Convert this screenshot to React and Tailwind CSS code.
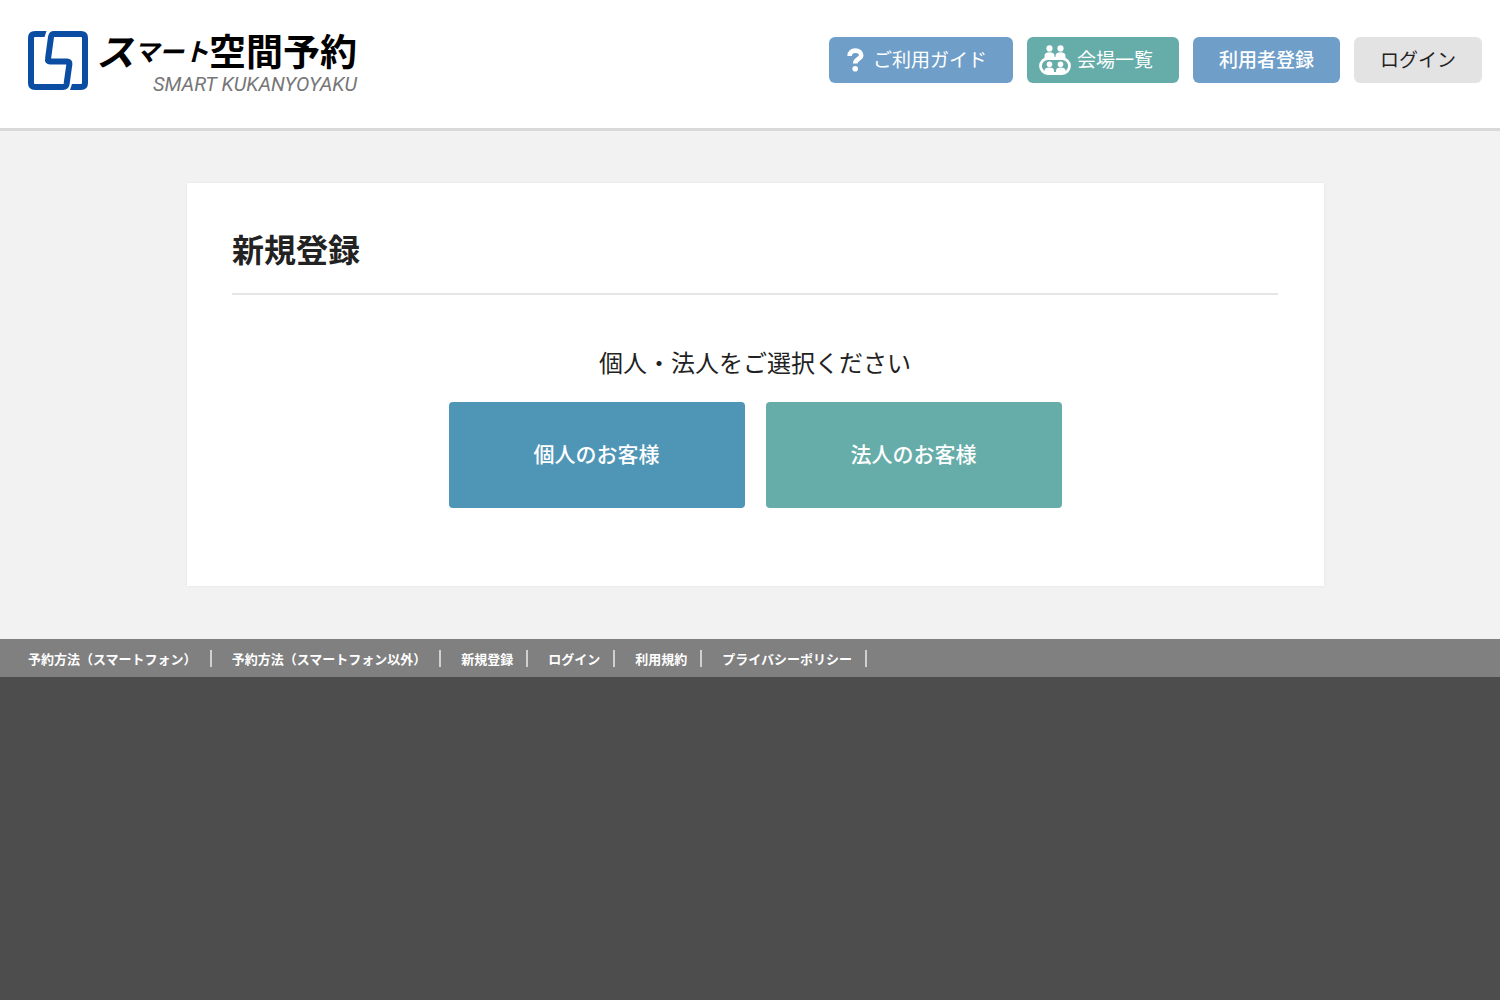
const footerLinks = [
  { href: '#guide-smartphone', label: '予約方法（スマートフォン）' },
  { href: '#guide-other', label: '予約方法（スマートフォン以外）' },
  { href: '#register', label: '新規登録' },
  { href: '#login', label: 'ログイン' },
  { href: '#terms', label: '利用規約' },
  { href: '#privacy', label: 'プライバシーポリシー' },
];

function LogoMark() {
  return (
    <svg width="60" height="60" viewBox="0 0 60 60" className="mt-px" aria-hidden="true">
      <g fill="none" stroke="#0b4da2" strokeWidth="6">
        <path d="M15 3H7Q3 3 3 7V52Q3 56 7 56H35Q38 56 38.6 53L41.4 33Q41.6 30.5 39 30.5H22Q19.5 30.5 20 28L23 6Q23.6 3 26 3H53Q57 3 57 7V52Q57 56 53 56H46" />
      </g>
      <path d="M14 0H18.5L16.5 6H14Z M47 53H44L42 59H47Z" fill="#0b4da2" />
    </svg>
  );
}

function QuestionIcon() {
  return (
    <svg width="17" height="24" viewBox="0 0 17 24" fill="none" aria-hidden="true">
      <path d="M2.6 8C2.6 4.4 5 2.6 8.4 2.6C12 2.6 14.2 4.6 14.2 7.2C14.2 11 8.2 11 8.2 15.6" stroke="white" strokeWidth="4.6" />
      <circle cx="8.2" cy="20.8" r="2.8" fill="white" />
    </svg>
  );
}

function VenueIcon() {
  return (
    <svg width="32" height="30" viewBox="0 0 32 30" aria-hidden="true">
      <g fill="white">
        <circle cx="10.5" cy="3.4" r="3.1" />
        <circle cx="21.5" cy="3.4" r="3.1" />
        <path d="M5.5 13V11Q5.500 7.300 10.5 7.300Q15.500 7.300 15.500 11V13Z" />
        <path d="M16.500 13V11Q16.500 7.300 21.5 7.300Q26.500 7.300 26.500 11V13Z" />
        <circle cx="10.5" cy="19.2" r="2.8" />
        <circle cx="21.5" cy="19.2" r="2.8" />
        <path d="M5.500 27V25.5Q5.500 22.600 10.5 22.600Q15 22.600 15 25.5V27Z" />
        <path d="M17 27V25.5Q17 22.600 21.5 22.600Q26.500 22.600 26.500 25.5V27Z" />
      </g>
      <rect x="1.5" y="13.5" width="29" height="15" rx="7.5" fill="none" stroke="white" strokeWidth="2.8" />
    </svg>
  );
}

function Logo() {
  return (
    <a href="#top" className="flex items-start gap-2">
      <LogoMark />
      <span className="flex flex-col items-end text-black">
        <span className="flex h-10 items-center leading-10 font-bold">
          <span className="text-[38px] italic">ス</span>
          <span className="text-[25px] italic">マート</span>
          <span className="text-[37px]">空間予約</span>
        </span>
        <span className="mt-1 font-[Roboto,sans-serif] text-[20px] leading-5 text-[#777] italic">
          SMART KUKANYOYAKU
        </span>
      </span>
    </a>
  );
}

export default function App() {
  return (
    <div className="flex min-h-screen flex-col bg-[#f2f2f2] font-['Noto_Sans_CJK_JP',sans-serif] text-[#222]">
      {/* Header */}
      <header className="flex h-[131px] items-start justify-between border-b-[3px] border-[#d9d9d9] bg-white pr-[18px] pl-7">
        <div className="pt-[30px]">
          <Logo />
        </div>
        <nav className="flex gap-[14px] pt-[37px] text-[19px]">
          <a href="#guide" className="flex h-[46px] items-center gap-[9px] rounded-md bg-[#6f9fc9] pr-[26px] pb-px pl-[18px] text-white">
            <QuestionIcon />
            ご利用ガイド
          </a>
          <a href="#venues" className="flex h-[46px] items-center gap-[6px] rounded-md bg-[#66adaa] pr-[26px] pb-px pl-3 text-white">
            <VenueIcon />
            会場一覧
          </a>
          <a href="#register" className="flex h-[46px] items-center rounded-md bg-[#6f9fc9] px-[26px] pb-px font-medium text-white">
            利用者登録
          </a>
          <a href="#login" className="flex h-[46px] items-center rounded-md bg-[#e3e3e3] px-[26px] pb-px">
            ログイン
          </a>
        </nav>
      </header>

      {/* Registration type */}
      <main className="pt-[52px] pr-44 pb-[53px] pl-[187px]">
        <section className="bg-white pt-[41px] pr-[46px] pb-[78px] pl-[45px] shadow-[0_0_2px_#e0e0e0]">
          <h1 className="border-b-2 border-[#e5e5e5] pb-[21px] text-[32px] leading-[48px] font-bold">新規登録</h1>
          <p className="mt-[49px] text-center text-[24px] leading-[36px]">個人・法人をご選択ください</p>
          <div className="mt-[22px] flex justify-center gap-[21px] text-[21px] font-medium text-white">
            <button type="button" className="h-[106px] w-[296px] rounded bg-[#4f95b5] pb-[3px]">
              個人のお客様
            </button>
            <button type="button" className="h-[106px] w-[296px] rounded bg-[#66adaa] pb-[3px]">
              法人のお客様
            </button>
          </div>
        </section>
      </main>

      {/* Footer */}
      <footer className="flex-1 bg-[#4d4d4d]">
        <ul className="flex h-[38px] items-center gap-5 bg-[#808080] pl-7 text-[13px] leading-[17px] font-bold text-white">
          {footerLinks.map((link) => (
            <li key={link.href} className="border-r-2 border-[#d0d0d0] pr-[13px]">
              <a href={link.href}>{link.label}</a>
            </li>
          ))}
        </ul>
      </footer>
    </div>
  );
}
